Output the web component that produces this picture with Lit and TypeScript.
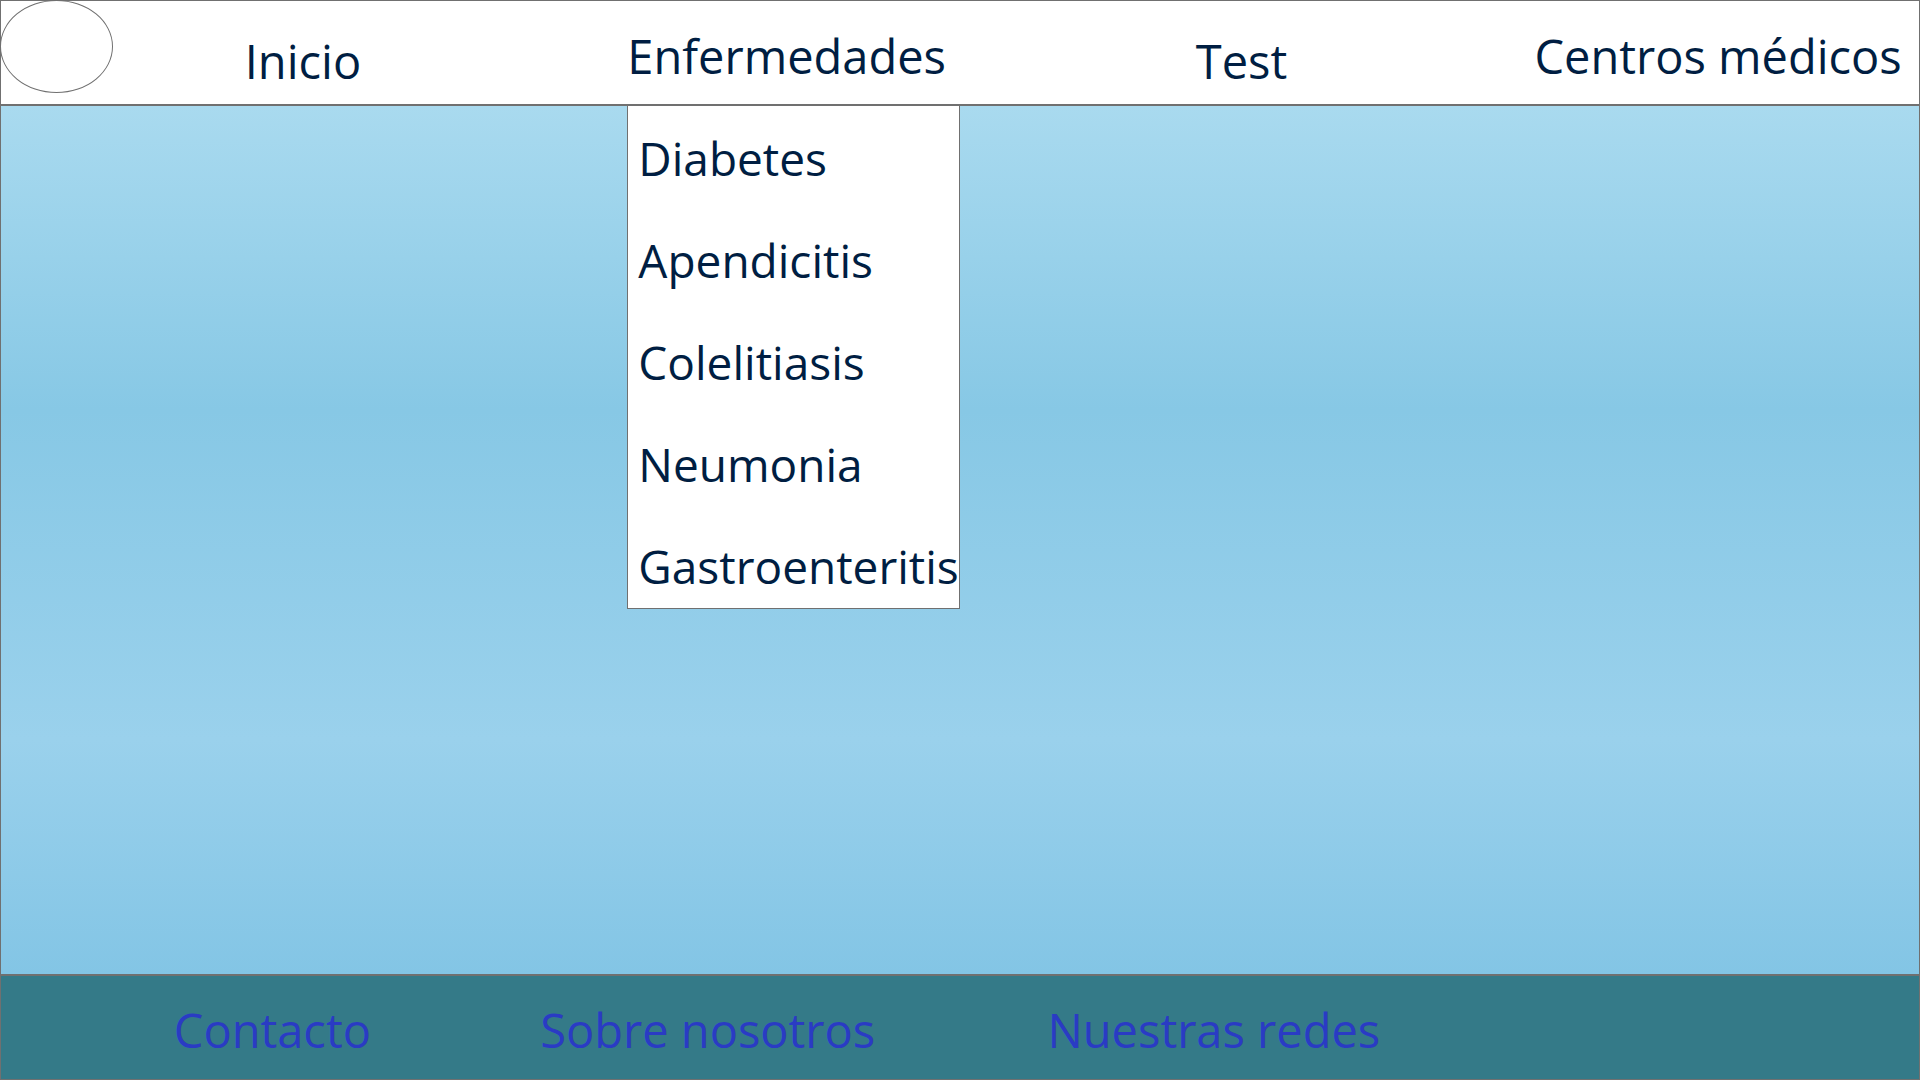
import { LitElement, html, css } from "lit";
import { customElement, property } from "lit/decorators.js";

const DISEASES = ["Diabetes", "Apendicitis", "Colelitiasis", "Neumonia", "Gastroenteritis"];

@customElement("site-header")
export class SiteHeader extends LitElement {
  @property({ attribute: false }) diseases: string[] = [];

  static styles = css`
    :host {
      display: block;
      position: relative;
      z-index: 1;
    }
    .bar {
      box-sizing: border-box;
      display: grid;
      grid-template-columns: 244fr 383fr 569fr 339fr 385fr;
      min-height: 105px;
      background: #fff;
      border: 1px solid #707070;
    }
    .logo {
      box-sizing: border-box;
      width: 113px;
      height: 93px;
      border: 1px solid #707070;
      border-radius: 50%;
      margin: -1px;
    }
    .item {
      position: relative;
      display: flex;
      align-items: center;
      padding-top: 6px;
    }
    .item.low {
      padding-top: 16px;
    }
    a {
      color: #001e42;
      text-decoration: none;
      white-space: nowrap;
    }
    .menu {
      position: absolute;
      top: calc(100% + 1px);
      left: 0;
      box-sizing: border-box;
      min-width: 333px;
      margin: 0;
      padding: 20px 0 10px 10px;
      list-style: none;
      display: grid;
      gap: 38px;
      font-size: 46px;
      background: #fff;
      border: 1px solid #707070;
    }
    .menu a {
      display: block;
    }
  `;

  render() {
    return html`
      <nav class="bar" aria-label="Principal">
        <div class="logo"></div>
        <div class="item low"><a href="#inicio">Inicio</a></div>
        <div class="item">
          <a href="#enfermedades">Enfermedades</a>
          <ul class="menu">
            ${this.diseases.map((name) => html`<li><a href="#${name.toLowerCase()}">${name}</a></li>`)}
          </ul>
        </div>
        <div class="item low"><a href="#test">Test</a></div>
        <div class="item"><a href="#centros">Centros médicos</a></div>
      </nav>
    `;
  }
}

@customElement("site-footer")
export class SiteFooter extends LitElement {
  static styles = css`
    :host {
      display: block;
    }
    .bar {
      box-sizing: border-box;
      display: grid;
      grid-template-columns: 367fr 508fr 873fr;
      align-items: center;
      min-height: 105px;
      padding-left: 9%;
      padding-top: 4px;
      background: #347a88;
      border: 1px solid #707070;
    }
    a {
      color: #2a3bc4;
      text-decoration: none;
      white-space: nowrap;
    }
  `;

  render() {
    return html`
      <nav class="bar" aria-label="Pie de página">
        <a href="#contacto">Contacto</a>
        <a href="#nosotros">Sobre nosotros</a>
        <a href="#redes">Nuestras redes</a>
      </nav>
    `;
  }
}

@customElement("app-root")
export class AppRoot extends LitElement {
  static styles = css`
    :host {
      display: flex;
      flex-direction: column;
      min-height: 100vh;
      font-family: "Open Sans", "Noto Sans", sans-serif;
      font-size: 47px;
      font-weight: 400;
      line-height: 64px;
    }
    .content {
      flex: 1;
      border: 1px solid #707070;
      background: linear-gradient(#a9daef 0%, #87c8e5 35%, #9ad1ec 73%, #83c5e5 100%);
    }
  `;

  render() {
    return html`
      <site-header .diseases=${DISEASES}></site-header>
      <main class="content"></main>
      <site-footer></site-footer>
    `;
  }
}
